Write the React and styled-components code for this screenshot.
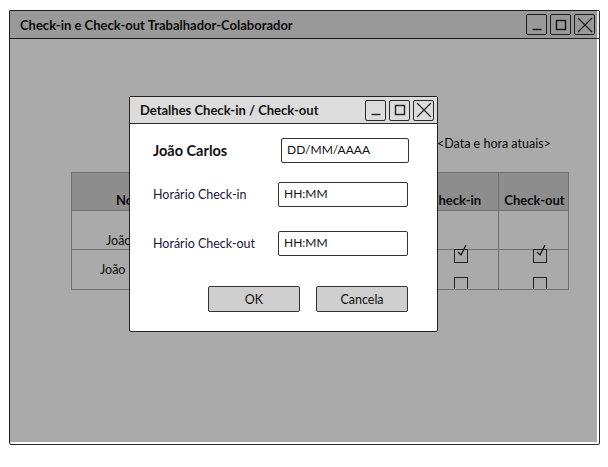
import React from 'react'
import styled, { createGlobalStyle } from 'styled-components'

const GlobalStyle = createGlobalStyle`
  html, body {
    margin: 0;
    padding: 0;
    background: #fff;
  }
  body {
    font-family: 'Comic Sans MS', Lato, 'Noto Sans', sans-serif;
    color: #111;
  }
`

const Window = styled.div`
  position: relative;
  box-sizing: border-box;
  margin: 10px 0 0 9px;
  width: 591px;
  height: 435px;
  border: 1.5px solid #2a2a2a;
  border-radius: 2px;
  background: #fff;
  display: flex;
  flex-direction: column;
`

const TitleBar = styled.div`
  box-sizing: border-box;
  height: ${p => p.$height}px;
  flex: none;
  display: flex;
  align-items: center;
  justify-content: space-between;
  padding: 0 ${p => p.$right}px 0 ${p => p.$pad}px;
  background: ${p => p.$bg};
  border-bottom: 1.5px solid #2a2a2a;
`

const Title = styled.span`
  font-size: 13px;
  font-weight: 700;
`

const WinButtons = styled.div`
  display: flex;
  gap: 3px;
`

const WinButton = styled.div`
  box-sizing: border-box;
  width: 21px;
  height: 21px;
  border: 1.5px solid #2a2a2a;
  border-radius: 2px;
  display: flex;
  align-items: center;
  justify-content: center;
  svg {
    display: block;
  }
`

const Body = styled.div`
  flex: 1;
  display: flex;
  flex-direction: column;
  padding-left: 61px;
`

const DateLine = styled.div`
  margin: 97px 0 0 366px;
  font-size: 12.5px;
  height: 16px;
  line-height: 16px;
`

const Table = styled.div`
  margin-top: 20px;
  width: 498px;
  display: grid;
  grid-template-columns: 130px 211px 86px 71px;
  grid-template-rows: 38px 39px 39px;
  border: 1px solid #a8a8a8;
  box-sizing: border-box;
  overflow: hidden;
`

const HeadCell = styled.div`
  background: #d4d4d4;
  border-right: 1px solid #a8a8a8;
  border-bottom: 1px solid #a8a8a8;
  display: flex;
  align-items: flex-end;
  justify-content: ${p => (p.$start ? 'flex-start' : 'center')};
  padding: 0 0 2px ${p => p.$left || 0}px;
  font-size: 13px;
  font-weight: 700;
  &:nth-child(4n) {
    border-right: none;
  }
`

const Cell = styled.div`
  border-right: 1px solid #a8a8a8;
  border-bottom: ${p => (p.$last ? 'none' : '1px solid #a8a8a8')};
  display: flex;
  align-items: ${p => p.$align};
  justify-content: ${p => (p.$start ? 'flex-start' : 'center')};
  padding: 0 0 ${p => p.$bottom}px ${p => p.$left}px;
  box-sizing: border-box;
  font-size: 12.5px;
  white-space: nowrap;
  &:nth-child(4n) {
    border-right: none;
  }
`

const Box = styled.div`
  position: relative;
  box-sizing: border-box;
  width: 14px;
  height: 14px;
  border: 1.5px solid #333;
  transform: translateY(${p => p.$drop}px);
  flex: none;
  svg {
    position: absolute;
    left: 1px;
    top: -6px;
  }
`

const Overlay = styled.div`
  position: absolute;
  top: -1px;
  left: -1px;
  right: 2px;
  bottom: 2px;
  background: rgba(0, 0, 0, 0.333);
`

const Dialog = styled.div`
  position: absolute;
  left: 119px;
  top: 85px;
  width: 309px;
  height: 236px;
  box-sizing: border-box;
  background: #fff;
  border: 1.5px solid #222;
  border-radius: 2px;
  display: flex;
  flex-direction: column;
`

const Form = styled.div`
  padding: 14px 0 0 23px;
  display: flex;
  flex-direction: column;
`

const FieldRow = styled.div`
  display: flex;
  align-items: center;
  margin-top: ${p => p.$top}px;
`

const Label = styled.div`
  width: ${p => p.$width}px;
  font-size: ${p => (p.$bold ? 14.5 : 12.5)}px;
  font-weight: ${p => (p.$bold ? 700 : 400)};
  color: ${p => (p.$bold ? '#111' : '#24143a')};
`

const Input = styled.div`
  box-sizing: border-box;
  width: ${p => p.$width}px;
  height: 25px;
  border: 1.5px solid #333;
  border-radius: 2px;
  padding: 0 0 2px 5px;
  display: flex;
  align-items: center;
  font-size: 12px;
  background: #fff;
`

const Buttons = styled.div`
  display: flex;
  gap: 16px;
  margin: 30px 0 0 55px;
`

const Button = styled.div`
  box-sizing: border-box;
  width: ${p => p.$width}px;
  height: 26px;
  border: 1.5px solid #333;
  border-radius: 2px;
  background: #cfcfcf;
  display: flex;
  align-items: center;
  justify-content: center;
  font-size: 12.5px;
`

const MinIcon = () => (
  <svg width="12" height="12" viewBox="0 0 12 12">
    <path d="M1.5 10.5 H10.5" stroke="#222" strokeWidth="1.4" fill="none" />
  </svg>
)

const MaxIcon = () => (
  <svg width="12" height="12" viewBox="0 0 12 12">
    <rect x="1.5" y="1.5" width="9" height="9" stroke="#222" strokeWidth="1.4" fill="none" />
  </svg>
)

const CloseIcon = () => (
  <svg width="16" height="16" viewBox="0 0 16 16">
    <path d="M1 1 L15 15 M15 1 L1 15" stroke="#222" strokeWidth="1.2" fill="none" />
  </svg>
)

const WindowControls = () => (
  <WinButtons>
    <WinButton><MinIcon /></WinButton>
    <WinButton><MaxIcon /></WinButton>
    <WinButton><CloseIcon /></WinButton>
  </WinButtons>
)

const Check = ({ checked, drop }) => (
  <Box $drop={drop}>
    {checked && (
      <svg width="13" height="14" viewBox="0 0 13 14">
        <path d="M2 8 L5 11 L10 1" stroke="#222" strokeWidth="1.3" fill="none" />
      </svg>
    )}
  </Box>
)

// the dialog covers most of the table; only what shows beside it is drawn
const rows = [
  { id: 'r1', name: 'João', left: 34, drop: 14, align: 'flex-end', bottom: 1 },
  { id: 'r2', name: 'João', left: 28, drop: 2, align: 'center', bottom: 0 }
]

export default function App() {
  return (
    <>
      <GlobalStyle />
      <Window>
        <TitleBar $height={28} $pad={10} $right={4} $bg="#e6e6e6">
          <Title>Check-in e Check-out Trabalhador-Colaborador</Title>
          <WindowControls />
        </TitleBar>
        <Body>
          <DateLine>&lt;Data e hora atuais&gt;</DateLine>
          <Table>
            <HeadCell $start $left={44}>No</HeadCell>
            <HeadCell />
            <HeadCell>Check-in</HeadCell>
            <HeadCell>Check-out</HeadCell>
            {rows.map((row, i) => {
              const last = i === rows.length - 1
              return (
                <React.Fragment key={row.id}>
                  <Cell $last={last} $align={row.align} $bottom={row.bottom} $left={row.left} $start>
                    {row.name}
                  </Cell>
                  <Cell $last={last} $align={row.align} $bottom={0} $left={0} />
                  <Cell $last={last} $align="flex-end" $bottom={0} $left={10}>
                    <Check checked={i === 0} drop={row.drop} />
                  </Cell>
                  <Cell $last={last} $align="flex-end" $bottom={0} $left={10}>
                    <Check checked={i === 0} drop={row.drop} />
                  </Cell>
                </React.Fragment>
              )
            })}
          </Table>
        </Body>
        <Overlay />
        <Dialog>
          <TitleBar $height={27} $pad={10} $right={3} $bg="#dcdcdc">
            <Title>Detalhes Check-in / Check-out</Title>
            <WindowControls />
          </TitleBar>
          <Form>
            <FieldRow $top={0}>
              <Label $bold $width={128}>João Carlos</Label>
              <Input $width={128}>DD/MM/AAAA</Input>
            </FieldRow>
            <FieldRow $top={19}>
              <Label $width={125}>Horário Check-in</Label>
              <Input $width={130}>HH:MM</Input>
            </FieldRow>
            <FieldRow $top={24}>
              <Label $width={125}>Horário Check-out</Label>
              <Input $width={130}>HH:MM</Input>
            </FieldRow>
            <Buttons>
              <Button $width={92}>OK</Button>
              <Button $width={92}>Cancela</Button>
            </Buttons>
          </Form>
        </Dialog>
      </Window>
    </>
  )
}
